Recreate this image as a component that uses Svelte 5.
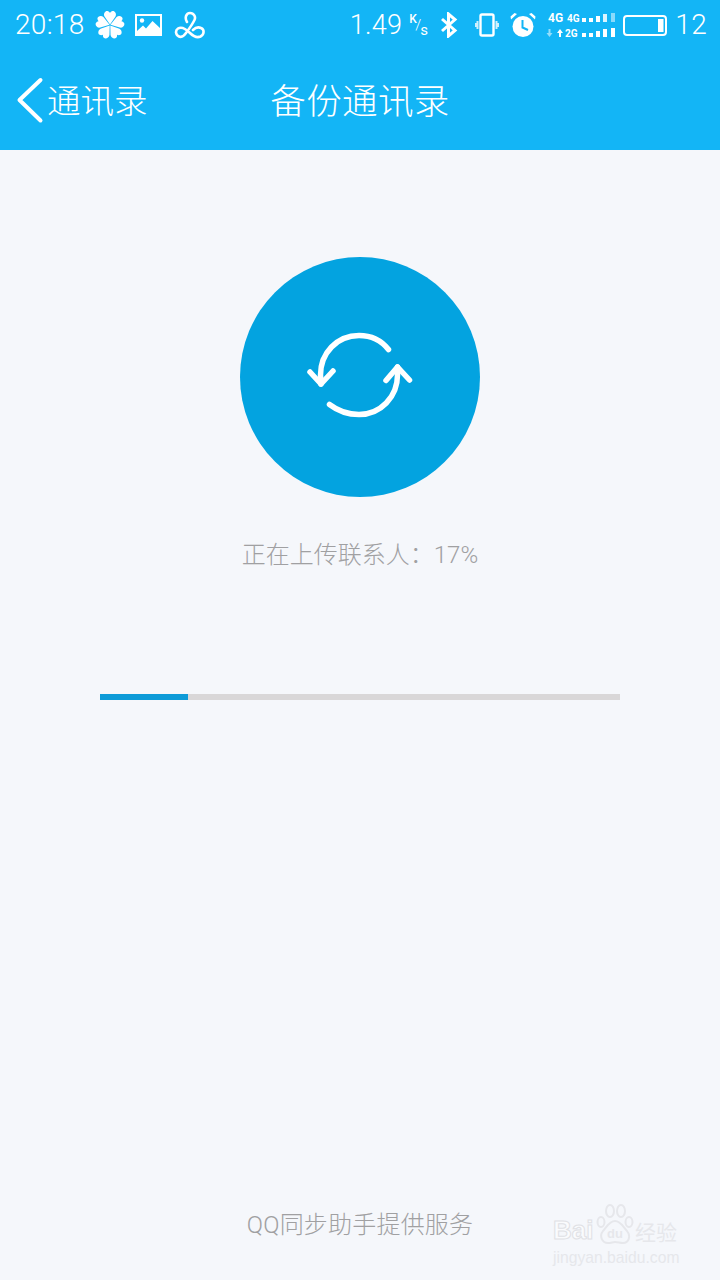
<script>
  const progress = 17;
  const petals = [0, 72, 144, 216, 288];
</script>

<div class="page">
  <header class="header">
    <div class="status">
      <div class="group">
        <span class="time">20:18</span>
        <svg class="clover" viewBox="0 0 30 30" width="30" height="30" aria-hidden="true">
          <g fill="#fff">
            {#each petals as angle}
              <path transform="rotate({angle} 15 15)" d="M15 14.500 L9.500 6.500 C8 3.500 10.500 0.500 12.500 1 C13.500 1.200 14.500 2 15 3 C15.500 2 16.500 1.200 17.500 1 C19.500 0.500 22 3.500 20.500 6.500 Z"/>
            {/each}
          </g>
        </svg>
        <svg class="pic" viewBox="0 0 27 22" width="27" height="22" aria-hidden="true">
          <path fill="#fff" fill-rule="evenodd" d="M0 0H27V22H0Z M2 2V17L8 11.500L11 14.500L17.500 7L25 14V2Z"/>
          <circle cx="7" cy="6.500" r="2.200" fill="#fff"/>
        </svg>
        <svg class="loop" viewBox="0 0 32 28" width="32" height="28" aria-hidden="true">
          <path fill="none" stroke="#fff" stroke-width="2.600" stroke-linecap="round" d="M13 11 C10.500 7 12 2 16 2 C20 2 22 6 20.500 9 C18.500 13 15 18 12 22 C10 25 7 26.500 5 25.500 C1.500 24 1 19.500 4 17.500 C8 15 12 18 16 22 C19 25 23 27 26.500 25.500 C30.500 23.500 30.500 18.500 27 17 C24 15.500 21 17 19 19"/>
        </svg>
      </div>
      <div class="group">
        <span class="speed">1.49</span>
        <span class="unit"><b>K</b><i>/</i><b>s</b></span>
        <svg class="bt" viewBox="0 0 18 26" width="18" height="26" aria-hidden="true">
          <path fill="none" stroke="#fff" stroke-width="3" d="M2 7 L15 18.500 L8.500 24 V2 L15 7.500 L2 19"/>
        </svg>
        <svg class="vib" viewBox="0 0 24 24" width="24" height="24" aria-hidden="true">
          <rect x="5.500" y="1.500" width="13" height="21" rx="1.500" fill="none" stroke="#fff" stroke-width="2.400"/>
          <path fill="none" stroke="#fff" stroke-width="2" opacity=".8" d="M2.500 8V16 M21.500 8V16 M0.700 10V14 M23.300 10V14"/>
        </svg>
        <svg class="alarm" viewBox="0 0 26 26" width="26" height="26" aria-hidden="true">
          <circle cx="13" cy="14.500" r="10.500" fill="#fff"/>
          <path fill="#fff" d="M1 7.500 L7 2 L4.500 1 L0.500 4.500 Z M25 7.500 L19 2 L21.500 1 L25.500 4.500 Z"/>
          <path fill="none" stroke="#13b5f6" stroke-width="2" d="M12.500 8V15.500L18 18"/>
        </svg>
        <svg class="signal" viewBox="0 -4 71 30" width="71" height="30" aria-hidden="true">
          <text x="2" y="9" class="g1">4G</text>
          <text x="21" y="9" class="g2">4G</text>
          <g fill="#fff">
            <rect x="36" y="5" width="4" height="4"/>
            <rect x="43" y="5" width="4" height="4"/>
            <rect x="50" y="3" width="4" height="6"/>
            <rect x="57" y="1" width="4" height="8" opacity=".85"/>
            <rect x="65" y="0" width="4" height="9" opacity=".5"/>
            <rect x="36" y="20" width="4" height="4"/>
            <rect x="43" y="20" width="4" height="4"/>
            <rect x="50" y="18" width="4" height="6"/>
            <rect x="57" y="16" width="4" height="8"/>
            <rect x="65" y="15" width="4" height="9"/>
            <path opacity=".55" d="M2.500 16H4.500V20H6.500L3.500 24L0.500 20H2.500Z"/>
            <path d="M14 16L17 20H15V24H13V20H11Z"/>
          </g>
          <text x="19" y="24" class="g2">2G</text>
        </svg>
        <svg class="battery" viewBox="0 0 45 24" width="45" height="24" aria-hidden="true">
          <rect x="1" y="3" width="42" height="19" rx="3" fill="none" stroke="#fff" stroke-width="2"/>
          <rect x="35" y="6" width="5.500" height="13" fill="#fff"/>
        </svg>
        <span class="level">12</span>
      </div>
    </div>
    <nav class="nav">
      <div class="back">
        <svg viewBox="0 0 30 50" width="30" height="50" aria-hidden="true">
          <path fill="none" stroke="#fff" stroke-width="4" stroke-linecap="round" stroke-linejoin="round" d="M25.500 6 L4.500 26 L25.500 46.500"/>
        </svg>
        <span>通讯录</span>
      </div>
      <h1 class="title">备份通讯录</h1>
    </nav>
  </header>

  <main class="main">
    <div class="circle">
      <svg viewBox="300 327 120 100" width="120" height="100" aria-hidden="true">
        <g fill="none" stroke="#fff" stroke-width="5.500" stroke-linecap="round" stroke-linejoin="round">
          <path d="M388.500 349.500 C381 340 370 335.500 359 335.500 C337 335.500 320.500 353 320.500 375 L321 384"/>
          <path d="M310 372 L321 384 L333 371"/>
          <path d="M329.500 404.500 C338 411 348 414.500 359 414.500 C380.500 414.500 397.500 397 397.500 375 L397.500 367"/>
          <path d="M386 380.500 L397.500 367 L409.500 380"/>
        </g>
      </svg>
    </div>
    <p class="label">正在上传联系人：{progress}%</p>
    <div class="track"><div class="fill" style="width: {progress}%"></div></div>
  </main>

  <footer class="footer">QQ同步助手提供服务</footer>

  <div class="watermark" aria-hidden="true">
    <div class="wm-row">
      <span class="bai">Bai</span>
      <svg viewBox="0 0 38 42" width="38" height="42">
        <g fill="none" stroke="#e6e7eb" stroke-width="2">
          <ellipse cx="5" cy="19" rx="3.500" ry="5"/>
          <ellipse cx="14" cy="8" rx="4" ry="6"/>
          <ellipse cx="25" cy="8" rx="4" ry="6"/>
          <ellipse cx="33" cy="19" rx="3.500" ry="5"/>
          <path d="M19 18C13 18 11 24 7 28C3 33 6 40 12 40C15 40 17 39 19 39C22 39 24 40 27 40C33 40 35 33 31 28C27 24 25 18 19 18Z"/>
        </g>
        <text x="11" y="35" class="du">du</text>
      </svg>
      <span class="jy">经验</span>
    </div>
    <div class="wm-url">jingyan.baidu.com</div>
  </div>
</div>

<style>
  :global(body) {
    margin: 0;
    background: #f5f7fb;
  }
  .page {
    position: relative;
    width: 720px;
    height: 1280px;
    display: flex;
    flex-direction: column;
    background: #f5f7fb;
    overflow: hidden;
    font-family: Roboto, "Noto Sans CJK SC", sans-serif;
  }
  .header {
    background: #13b5f6;
    color: #fff;
    height: 150px;
    flex: none;
  }
  .status {
    height: 50px;
    display: flex;
    justify-content: space-between;
    align-items: center;
    padding: 0 13px 0 15px;
    font-family: Roboto, sans-serif;
    font-weight: 300;
  }
  .group {
    display: flex;
    align-items: center;
  }
  .time, .speed, .level {
    font-size: 27px;
    line-height: 50px;
    letter-spacing: 0.3px;
  }
  .time { font-size: 28px; }
  .level { font-size: 28px; margin-left: 7px; }
  .clover { margin-left: 10px; }
  .pic { margin-left: 10px; }
  .loop { margin-left: 12px; }
  .unit {
    margin-left: 7px;
    margin-top: -2px;
    font-size: 13px;
    display: flex;
    width: 19px;
    height: 24px;
    position: relative;
  }
  .unit b { font-weight: 500; position: absolute; left: 0; top: 0; font-size: 12px; }
  .unit i { font-style: normal; position: absolute; left: 6px; top: 4px; font-size: 15px; }
  .unit b:last-child { font-weight: 400; left: 11px; top: 9px; font-size: 15px; }
  .bt { margin-left: 12px; }
  .vib { margin-left: 17px; }
  .alarm { margin-left: 11px; }
  .signal { margin-left: 10px; margin-top: -2px; }
  .signal text { fill: #fff; font-family: Roboto, sans-serif; }
  .g1 { font-size: 12px; font-weight: 700; }
  .g2 { font-size: 10px; font-weight: 700; }
  .battery { margin-left: 6px; }
  .nav {
    position: relative;
    height: 100px;
    display: flex;
    align-items: center;
    justify-content: center;
    padding-bottom: 4px;
    box-sizing: border-box;
    font-family: "Noto Sans CJK SC", sans-serif;
  }
  .back {
    position: absolute;
    left: 15px;
    top: 0;
    height: 100px;
    display: flex;
    align-items: center;
    gap: 2px;
    font-size: 33.500px;
    font-weight: 300;
  }
  .back span { margin-top: -4px; }
  .back svg { margin-top: -2px; }
  .title {
    margin: 0;
    font-size: 35.500px;
    font-weight: 300;
    letter-spacing: 0.4px;
  }
  .main {
    display: flex;
    flex-direction: column;
    align-items: center;
    padding-top: 107px;
  }
  .circle {
    width: 240px;
    height: 240px;
    border-radius: 50%;
    background: #03a3e0;
    display: flex;
    align-items: center;
    justify-content: center;
  }
  .label {
    margin: 40px 0 0;
    font-size: 24px;
    line-height: 36px;
    color: #a0a0a2;
    font-weight: 300;
  }
  .track {
    margin-top: 121px;
    width: 520px;
    height: 6px;
    background: #d9d7d8;
  }
  .fill {
    height: 100%;
    background: #0e9bd8;
  }
  .footer {
    margin-top: auto;
    padding-bottom: 37px;
    line-height: 36px;
    text-align: center;
    font-size: 24px;
    letter-spacing: 0.2px;
    color: #a0a0a2;
    font-weight: 300;
  }
  .watermark {
    position: absolute;
    left: 553px;
    top: 1203px;
    width: 130px;
    color: #e6e7eb;
    font-family: "Liberation Sans", sans-serif;
  }
  .wm-row {
    display: flex;
    align-items: flex-end;
    height: 42px;
  }
  .bai {
    font-size: 26px;
    font-weight: 700;
    line-height: 30px;
    width: 43px;
    color: #fafbfd;
    -webkit-text-stroke: 1px #e0e1e5;
  }
  .jy {
    margin-left: 1px;
    font-size: 21px;
    line-height: 28px;
    font-family: "Noto Sans CJK SC", sans-serif;
  }
  .du {
    fill: #e6e7eb;
    font-size: 13px;
    font-weight: 700;
    font-family: "Liberation Sans", sans-serif;
  }
  .wm-url {
    margin-top: 3px;
    font-size: 15.700px;
    line-height: 20px;
    white-space: nowrap;
  }
</style>
